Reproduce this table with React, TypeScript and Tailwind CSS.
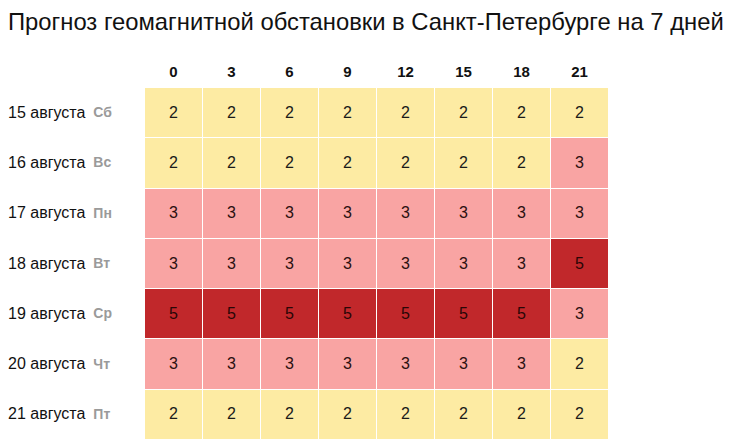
const hours = [0, 3, 6, 9, 12, 15, 18, 21]

const days = [
  { date: '15 августа', dow: 'Сб', values: [2, 2, 2, 2, 2, 2, 2, 2] },
  { date: '16 августа', dow: 'Вс', values: [2, 2, 2, 2, 2, 2, 2, 3] },
  { date: '17 августа', dow: 'Пн', values: [3, 3, 3, 3, 3, 3, 3, 3] },
  { date: '18 августа', dow: 'Вт', values: [3, 3, 3, 3, 3, 3, 3, 5] },
  { date: '19 августа', dow: 'Ср', values: [5, 5, 5, 5, 5, 5, 5, 3] },
  { date: '20 августа', dow: 'Чт', values: [3, 3, 3, 3, 3, 3, 3, 2] },
  { date: '21 августа', dow: 'Пт', values: [2, 2, 2, 2, 2, 2, 2, 2] },
]

function cellClass(v: number) {
  if (v >= 5) return 'bg-[#c1282b] text-[#2a0606]'
  if (v >= 3) return 'bg-[#f9a4a3] text-[#2a1010]'
  return 'bg-[#fdeba3] text-[#1a1a1a]'
}

export default function App() {
  return (
    <div className="w-[742px] h-[446px] bg-white overflow-hidden font-['Liberation_Sans',Arial,sans-serif]">
      {/* Title */}
      <h1 className="pl-[8px] pt-[8px] text-[23.8px] leading-[28px] text-[#111] whitespace-nowrap">
        Прогноз геомагнитной обстановки в Санкт-Петербурге на 7 дней
      </h1>

      {/* Hours header */}
      <div className="flex mt-[26px]">
        <div className="w-[145px]" />
        <div className="grid grid-cols-[repeat(8,57px)] gap-x-px">
          {hours.map((h) => (
            <div key={h} className="text-center text-[15px] font-bold leading-[20px] text-[#111]">
              {h}
            </div>
          ))}
        </div>
      </div>

      {/* Table */}
      <div className="flex mt-[6px]">
        <div className="w-[145px] flex flex-col gap-y-px">
          {days.map((d) => (
            <div key={d.date} className="h-[49.3px] flex items-center pl-[8px]">
              <span className="text-[16px] text-[#111]">{d.date}</span>
              <span className="ml-[8px] text-[14px] font-bold text-[#9a9a9a]">{d.dow}</span>
            </div>
          ))}
        </div>
        <div className="grid grid-cols-[repeat(8,57px)] gap-px bg-white">
          {days.map((d) =>
            d.values.map((v, i) => (
              <div
                key={d.date + i}
                className={`h-[49.3px] flex items-center justify-center text-[16px] ${cellClass(v)}`}
              >
                {v}
              </div>
            ))
          )}
        </div>
      </div>
    </div>
  )
}
